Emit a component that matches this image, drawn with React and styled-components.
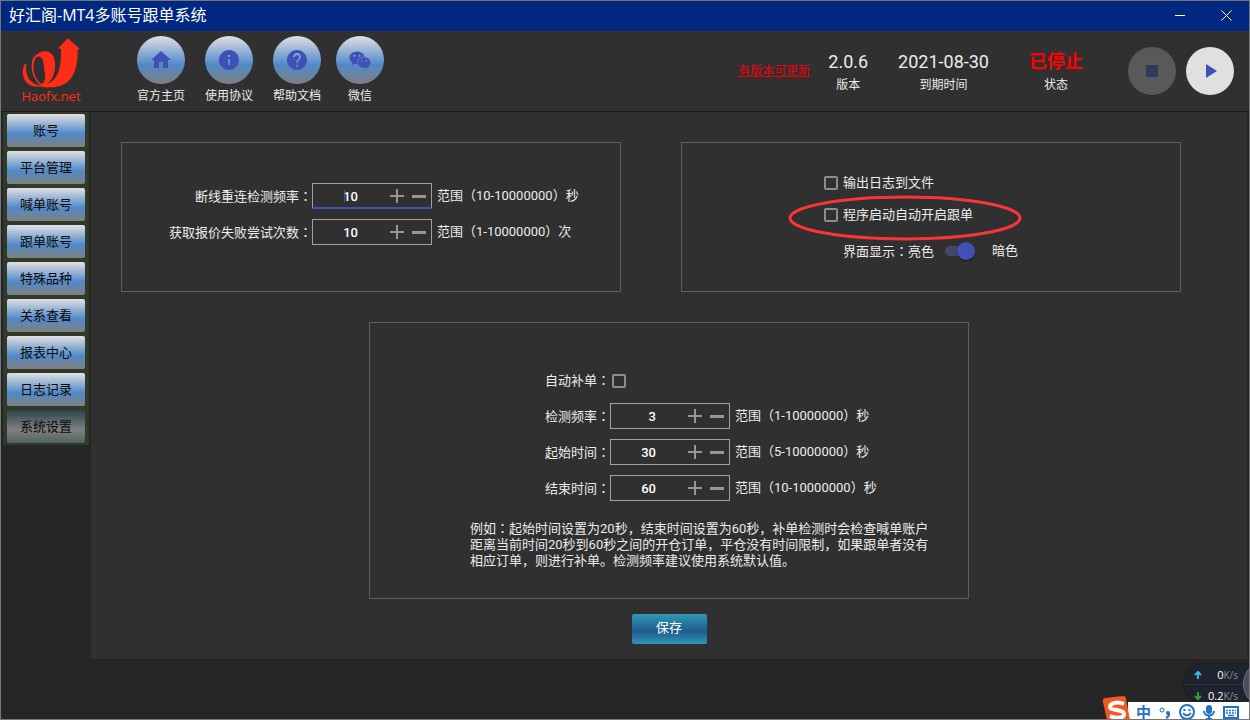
import React, { useState } from "react";
import styled, { createGlobalStyle, css } from "styled-components";
import { MdHome, MdInfo, MdHelp, MdStop, MdPlayArrow } from "react-icons/md";
import { AiFillWechat } from "react-icons/ai";

const GlobalStyle = createGlobalStyle`
  * { box-sizing: border-box; }
  body {
    margin: 0;
    background: #252525;
    color: #ececec;
    font: 13px/16px Roboto, "Noto Sans CJK SC", sans-serif;
  }
  button, input { font: inherit; color: inherit; }
  button { border: 0; padding: 0; cursor: pointer; }
  a { color: inherit; }
`;

const steel = "linear-gradient(#e2e0e2 0%, #5189c9 60%, #808080 100%)";

const Window = styled.div`
  position: relative;
  display: flex;
  flex-direction: column;
  min-height: 100vh;
  border: 1px solid #767676;
  background: #252525;
  overflow: hidden;
`;

const TitleBar = styled.header`
  display: flex;
  align-items: center;
  height: 30px;
  padding: 0 0 2px 8px;
  background: #002880;
  color: #fff;
`;

const Title = styled.h1`
  flex: 1;
  margin: 0;
  font: 400 16px/20px "Open Sans", "Noto Sans CJK SC", sans-serif;
`;

const CaptionButton = styled.button`
  display: grid;
  place-items: center;
  width: 46px;
  height: 28px;
  background: none;
`;

const Toolbar = styled.div`
  display: flex;
  height: 81px;
  padding-right: 15px;
  background: #303030;
  border-bottom: 1px solid #1c1c1c;
`;

const Brand = styled.div`
  display: flex;
  flex-direction: column;
  align-items: center;
  width: 100px;
  padding-top: 7px;
  color: #ff2d17;
  font: 13px/16px "Open Sans", sans-serif;
`;

const Shortcuts = styled.nav`
  display: flex;
  padding: 5px 0 0 26px;
`;

const Shortcut = styled.a`
  display: flex;
  flex-direction: column;
  align-items: center;
  gap: 4px;
  padding: 0 ${(p) => (p.$compact ? 5 : 10)}px;
  font-size: 12px;
  text-decoration: none;
`;

const Disc = styled.span`
  display: grid;
  place-items: center;
  width: 48px;
  height: 48px;
  border-radius: 50%;
  background: ${steel};
  color: #3f51b5;
`;

const Status = styled.div`
  display: flex;
  margin: 0 20px 0 auto;
`;

const UpdateLink = styled.a`
  align-self: center;
  margin-right: 3px;
  color: #e8000c;
  font-size: 12px;
`;

const Stat = styled.div`
  padding: 20px ${(p) => (p.$wide ? 25 : 15)}px 0;
  text-align: center;
  font-size: 12px;
`;

const StatValue = styled.div`
  margin-bottom: 4px;
  font-size: 18px;
  line-height: 22px;
  ${(p) => p.$alert && css`color: #ff0000; font-weight: 700;`}
`;

const Controls = styled.div`
  display: flex;
  align-items: center;
  gap: 10px;
`;

const RoundButton = styled.button`
  display: grid;
  place-items: center;
  width: 48px;
  height: 48px;
  border-radius: 50%;
  background: #e0e0e0;
  color: #3f51b5;

  &:disabled { background: #595959; color: #333a5c; }
`;

const Body = styled.div`
  display: flex;
  align-items: flex-start;
  padding-right: 2px;
`;

const Menu = styled.nav`
  display: flex;
  flex-direction: column;
  flex: none;
  gap: 4px;
  width: 86px;
  margin: 0 2px;
  padding: 2px 4px;
  background: #2f3a28;
`;

const MenuButton = styled.button`
  height: 33px;
  border-radius: 2px;
  background: ${(p) => (p.$active ? "linear-gradient(#2c4548 0%, #808080 60%, #50625f 100%)" : steel)};
  color: #0a0a0a;
`;

const Content = styled.main`
  flex: 1;
  padding: 30px 0 15px;
  background: #303030;
`;

const TopPanels = styled.div`
  display: grid;
  grid-template-columns: 1fr 1fr;
  gap: 60px;
  padding: 0 66px 0 30px;
`;

const Panel = styled.section`
  border: 1px solid #5e5e5a;
`;

const ConnectionPanel = styled(Panel)`
  display: flex;
  flex-direction: column;
  gap: 10px;
  padding: 40px 0 46px;
`;

const OptionsPanel = styled(Panel)`
  padding: 24px 0 0 142px;
`;

const RefillPanel = styled(Panel)`
  display: flex;
  flex-direction: column;
  gap: 10px;
  max-width: 600px;
  margin: 30px auto 15px;
  padding: 44px 0 29px;
`;

const Row = styled.div`
  display: grid;
  grid-template-columns: ${(p) => p.$label}px 120px 1fr;
  align-items: center;
  height: 26px;
`;

const RowLabel = styled.label`
  text-align: right;
`;

const MidColon = styled.span`
  font-family: "Noto Sans CJK TC", sans-serif;
`;

const Range = styled.span`
  padding-left: 5px;
`;

const Spinner = styled.div`
  position: relative;
  display: flex;
  height: 26px;
  padding-right: 1px;
  border: 1px solid #a0a0a0;
  ${(p) => p.$active && css`
    border-bottom: 2px solid #3f51b5;
    &::before {
      content: "";
      position: absolute;
      top: 6px;
      left: 31px;
      width: 1px;
      height: 12px;
      background: #3f51b5;
    }
  `}
`;

const SpinnerInput = styled.input`
  flex: none;
  width: 45px;
  margin-right: auto;
  padding: 2px 0 0;
  border: 0;
  outline: 0;
  background: none;
  color: #fff;
  font-weight: 500;
  text-align: right;
`;

const StepButton = styled.button`
  display: grid;
  place-items: center;
  width: 22px;
  height: 24px;
  background: none;
  color: #969696;
`;

const Check = styled.input`
  appearance: none;
  flex: none;
  width: 14px;
  height: 14px;
  margin: 0;
  border: 2px solid #8c8c8c;
  border-radius: 2px;

  &:checked { background: #3f51b5; }
`;

const CheckCell = styled.span`
  display: flex;
  padding: 2px 0 0 2px;
`;

const Option = styled.div`
  position: relative;
  display: flex;
  align-items: center;
  gap: 5px;
  height: 32px;
`;

const ThemeOption = styled.div`
  display: flex;
  align-items: center;
  height: 40px;
  padding-left: 19px;
`;

const Switch = styled.input`
  appearance: none;
  position: relative;
  width: 30px;
  height: 10px;
  margin: 0 17px 0 11px;
  border-radius: 5px;
  background: #46456a;

  &::before {
    content: "";
    position: absolute;
    top: -4px;
    left: ${(p) => (p.checked ? 12 : 0)}px;
    width: 18px;
    height: 18px;
    border-radius: 50%;
    background: #3f51b5;
    box-shadow: 0 1px 2px rgba(0, 0, 0, 0.5);
  }
`;

const Highlight = styled.svg`
  position: absolute;
  left: -36px;
  top: -4px;
  pointer-events: none;
`;

const Note = styled.p`
  width: 460px;
  margin: 9px 0 0 100px;
`;

const SaveButton = styled.button`
  display: block;
  width: 75px;
  height: 30px;
  margin: 0 auto;
  padding-bottom: 2px;
  border-radius: 2px;
  background: linear-gradient(#2f97b6 0%, #1f5c8e 58%, #2f97b6 100%);
  color: #fff;
`;

const DesktopCorner = styled.aside`
  position: absolute;
  right: -1px;
  bottom: -1px;
  width: 148px;
  height: 56px;
`;

const NetMeter = styled.div`
  position: absolute;
  right: 0;
  bottom: 18px;
  width: 66px;
  height: 38px;
  overflow: hidden;
  border-radius: 20px 0 0 20px;
  background: #1f232e;
  box-shadow: 0 0 2px #111;

  &::after {
    content: "";
    position: absolute;
    left: 59px;
    top: -4px;
    width: 46px;
    height: 46px;
    border: 1px solid #6d7086;
    border-radius: 50%;
    background: #4a4c5e;
  }
`;

const NetRow = styled.div`
  display: grid;
  grid-template-columns: 18px 1fr;
  align-items: center;
  height: 20px;
  padding: 2px 12px 0 5px;
  color: #fff;
  font: 11px/16px "Open Sans", sans-serif;
  text-align: right;

  & + & { border-top: 1px solid #2c303c; }
`;

const Unit = styled.span`
  color: #8b8f98;
  font-size: 10px;
`;

const InputBar = styled.div`
  position: absolute;
  right: 0;
  bottom: 0;
  display: flex;
  align-items: center;
  width: 122px;
  height: 18px;
  padding: 2px 0 0 8px;
  gap: 8px;
  background: #fff;
  color: #1f73c4;
  font: 700 15px/16px "Noto Sans CJK SC", sans-serif;

  svg { flex: none; }
`;

const ImeLogo = styled.svg`
  position: absolute;
  left: 0;
  bottom: 0;
`;

function Arrow({ color, down }) {
  return (
    <svg width="18" height="10" viewBox="0 0 18 10" fill="none" stroke={color} strokeWidth="2" aria-hidden="true">
      <path d={down ? "M9 1v7M6 5l3 3 3-3" : "M9 9V2M6 5l3-3 3 3"} />
    </svg>
  );
}

function Label({ text, ...rest }) {
  return (
    <RowLabel {...rest}>
      {text}
      <MidColon>：</MidColon>
    </RowLabel>
  );
}

function NumberRow({ id, label, labelWidth, initial, range, active }) {
  const [value, setValue] = useState(initial);
  return (
    <Row $label={labelWidth}>
      <Label htmlFor={id} text={label} />
      <Spinner $active={active}>
        <SpinnerInput id={id} inputMode="numeric" value={value} onChange={(e) => setValue(e.target.value)} />
        <StepButton type="button" aria-label="增加" onClick={() => setValue(Number(value) + 1)}>
          <svg width="14" height="14" stroke="currentColor" strokeWidth="2"><path d="M0 7h14M7 0v14" /></svg>
        </StepButton>
        <StepButton type="button" aria-label="减少" onClick={() => setValue(Number(value) - 1)}>
          <svg width="14" height="14" stroke="currentColor" strokeWidth="3"><path d="M0 7.5h14" /></svg>
        </StepButton>
      </Spinner>
      <Range>{range}</Range>
    </Row>
  );
}

const shortcuts = [
  { text: "官方主页", icon: MdHome },
  { text: "使用协议", icon: MdInfo },
  { text: "帮助文档", icon: MdHelp },
  { text: "微信", icon: AiFillWechat, compact: true },
];

const menu = ["账号", "平台管理", "喊单账号", "跟单账号", "特殊品种", "关系查看", "报表中心", "日志记录", "系统设置"];

export default function App() {
  const [page, setPage] = useState("系统设置");
  const [dark, setDark] = useState(true);

  return (
    <>
      <GlobalStyle />
      <Window>
        <TitleBar>
          <Title>好汇阁-MT4多账号跟单系统</Title>
          <CaptionButton type="button" aria-label="最小化">
            <svg width="10" height="10" stroke="#fff"><path d="M0 5.5h10" /></svg>
          </CaptionButton>
          <CaptionButton type="button" aria-label="关闭">
            <svg width="11" height="11" stroke="#fff"><path d="M.5.5l10 10M10.5.5l-10 10" /></svg>
          </CaptionButton>
        </TitleBar>

        <Toolbar>
          <Brand>
            <svg width="58" height="50" viewBox="38 18 174 150" fill="#ff2d17" aria-hidden="true">
              <path d="M147 48 175 19 211 50 205 53C206 112 190 166 122 166 108 167 95 165 84 160 126 160 158 142 155 52Z" />
              <path fillRule="evenodd" d="M74 74C88 60 104 54 118 60 134 66 138 84 137 104 136 134 122 154 98 164 78 150 62 120 68 90 69 84 71 78 74 74ZM80 76C70 92 68 124 86 146 91 153 96 157 101 154 112 142 106 124 104 104 103 86 96 66 80 76Z" />
              <path d="M45 98C36 118 40 146 60 158 72 164 86 165 96 162 72 158 44 140 51 94Z" />
            </svg>
            Haofx.net
          </Brand>
          <Shortcuts>
            {shortcuts.map(({ text, icon: Icon, compact }) => (
              <Shortcut key={text} href="#" $compact={compact}>
                <Disc><Icon size={24} /></Disc>
                {text}
              </Shortcut>
            ))}
          </Shortcuts>
          <Status>
            <UpdateLink href="#">有版本可更新</UpdateLink>
            <Stat><StatValue>2.0.6</StatValue>版本</Stat>
            <Stat><StatValue>2021-08-30</StatValue>到期时间</Stat>
            <Stat $wide><StatValue $alert>已停止</StatValue>状态</Stat>
          </Status>
          <Controls>
            <RoundButton type="button" aria-label="停止" disabled><MdStop size={24} /></RoundButton>
            <RoundButton type="button" aria-label="启动"><MdPlayArrow size={24} /></RoundButton>
          </Controls>
        </Toolbar>

        <Body>
          <Menu>
            {menu.map((item) => (
              <MenuButton key={item} type="button" $active={item === page} onClick={() => setPage(item)}>
                {item}
              </MenuButton>
            ))}
          </Menu>

          <Content>
            <TopPanels>
              <ConnectionPanel>
                <NumberRow id="reconnect" label="断线重连检测频率" labelWidth={190} initial="10" range="范围（10-10000000）秒" active />
                <NumberRow id="retry" label="获取报价失败尝试次数" labelWidth={190} initial="10" range="范围（1-10000000）次" />
              </ConnectionPanel>
              <OptionsPanel>
                <Option>
                  <Check type="checkbox" id="log" />
                  <label htmlFor="log">输出日志到文件</label>
                </Option>
                <Option>
                  <Check type="checkbox" id="autostart" />
                  <label htmlFor="autostart">程序启动自动开启跟单</label>
                  <Highlight width="234" height="46" fill="none" stroke="#fb3535" strokeWidth="3" aria-hidden="true">
                    <ellipse cx="117" cy="23" rx="115" ry="21" />
                  </Highlight>
                </Option>
                <ThemeOption>
                  <label htmlFor="theme">界面显示<MidColon>：</MidColon>亮色</label>
                  <Switch type="checkbox" role="switch" id="theme" checked={dark} onChange={(e) => setDark(e.target.checked)} />
                  <span>暗色</span>
                </ThemeOption>
              </OptionsPanel>
            </TopPanels>

            <RefillPanel>
              <Row $label={240}>
                <Label htmlFor="refill" text="自动补单" />
                <CheckCell><Check type="checkbox" id="refill" /></CheckCell>
              </Row>
              <NumberRow id="interval" label="检测频率" labelWidth={240} initial="3" range="范围（1-10000000）秒" />
              <NumberRow id="start" label="起始时间" labelWidth={240} initial="30" range="范围（5-10000000）秒" />
              <NumberRow id="end" label="结束时间" labelWidth={240} initial="60" range="范围（10-10000000）秒" />
              <Note>
                例如<MidColon>：</MidColon>起始时间设置为20秒，结束时间设置为60秒，补单检测时会检查喊单账户距离当前时间20秒到60秒之间的开仓订单，平仓没有时间限制，如果跟单者没有相应订单，则进行补单。检测频率建议使用系统默认值。
              </Note>
            </RefillPanel>

            <SaveButton type="button">保存</SaveButton>
          </Content>
        </Body>

        <DesktopCorner>
          <NetMeter>
            <NetRow><Arrow color="#41b1ea" /><span>0<Unit>K/s</Unit></span></NetRow>
            <NetRow><Arrow color="#27a52c" down /><span>0.2<Unit>K/s</Unit></span></NetRow>
          </NetMeter>
          <InputBar>
            <span>中</span>
            <svg width="12" height="16" fill="none" stroke="currentColor" aria-hidden="true">
              <circle cx="3" cy="6" r="2" />
              <circle cx="9" cy="9" r="2" fill="currentColor" stroke="none" />
              <path d="M10 9q1 3-3 5" strokeWidth="2" />
            </svg>
            <svg width="16" height="16" fill="none" stroke="currentColor" strokeWidth="2" aria-hidden="true">
              <circle cx="8" cy="8" r="7" />
              <path d="M5.500 5v2M10.500 5v2M4 9q4 5 8 0" />
            </svg>
            <svg width="12" height="16" fill="none" stroke="currentColor" strokeWidth="2" aria-hidden="true">
              <rect x="3" y="1" width="6" height="9" rx="3" fill="currentColor" stroke="none" />
              <path d="M1 7c0 6 10 6 10 0M6 12v3M3 15h6" />
            </svg>
            <svg width="16" height="16" fill="none" stroke="currentColor" aria-hidden="true">
              <rect x="1" y="3" width="14" height="11" strokeWidth="2" />
              <path d="M3 6.500h10M3 9h10" strokeWidth="1.500" strokeDasharray="2 1" />
              <path d="M5 11.500h6" strokeWidth="1.500" />
            </svg>
          </InputBar>
          <ImeLogo width="30" height="24" viewBox="0 0 30 24" aria-hidden="true">
            <path d="M1 6Q0 3 3 2L21 0Q24 0 24 3L28 24H5Z" fill="#f05a22" />
            <path d="M22 8C15 5 8 7 8 11S22 13 22 18 13 22 8 20" fill="none" stroke="#fff" strokeWidth="4" />
          </ImeLogo>
        </DesktopCorner>
      </Window>
    </>
  );
}
